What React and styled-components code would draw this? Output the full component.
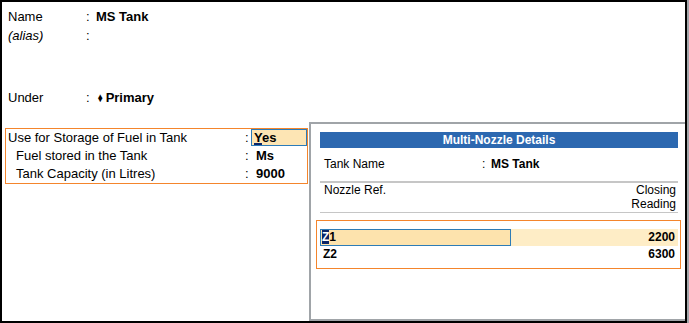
import React from 'react';
import styled, { createGlobalStyle } from 'styled-components';

const GlobalStyle = createGlobalStyle`
  html, body {
    margin: 0;
    padding: 0;
    background: #fff;
  }
  body {
    font-family: "Liberation Sans", Arial, sans-serif;
    color: #000;
  }
`;

const Screen = styled.div`
  width: 689px;
  height: 323px;
  display: flex;
  background: #a3a6aa;
`;

const Window = styled.div`
  position: relative;
  box-sizing: border-box;
  width: 687px;
  height: 323px;
  border: 2px solid #000;
  background: #fff;
  padding: 5px 0 0 3px;
  font-size: 13px;
`;

const MasterFields = styled.div`
  padding-left: 3px;
`;

const Field = styled.div`
  display: grid;
  grid-template-columns: 78px 10px auto;
  height: 19px;
  line-height: 19px;
  margin-top: ${(p) => p.$gap || 0}px;
`;

const Label = styled.span`
  font-style: ${(p) => (p.$italic ? 'italic' : 'normal')};
`;

const Value = styled.span`
  font-weight: bold;
`;

const Diamond = styled.span`
  display: inline-block;
  font-size: 13px;
  transform: scaleX(0.75);
  margin: 0 2px 0 1px;
`;

const FuelGroup = styled.div`
  box-sizing: border-box;
  width: 303px;
  margin-top: 21px;
  border: 1px solid #f4852c;
`;

const GroupRow = styled.div`
  display: grid;
  grid-template-columns: 239px 6px 1fr;
  height: 18px;
  line-height: 18px;
`;

const GroupLabel = styled.span`
  padding-left: ${(p) => (p.$indent ? 10 : 2)}px;
  white-space: nowrap;
`;

const GroupValue = styled.span`
  box-sizing: border-box;
  height: 17px;
  line-height: 16px;
  font-weight: bold;
  padding-left: ${(p) => (p.$active ? 2 : 4)}px;
  border: 1px solid ${(p) => (p.$active ? '#2b7bb9' : 'transparent')};
  background: ${(p) => (p.$active ? '#fde5b4' : 'transparent')};
`;

const Hotkey = styled.span`
  text-decoration: underline;
  text-decoration-thickness: 2px;
  text-underline-offset: 1px;
  text-decoration-color: #0b2567;
`;

const Popup = styled.div`
  position: absolute;
  left: 307px;
  top: 120px;
  right: 0;
  bottom: 0;
  box-sizing: border-box;
  border: 2px solid #a0a4a8;
  border-right: none;
  background: #fff;
  padding: 8px 7px 0 9px;
  font-size: 12px;
`;

const Title = styled.div`
  height: 16px;
  line-height: 16px;
  background: #2c68b0;
  color: #fff;
  font-weight: bold;
  text-align: center;
`;

const TankRow = styled.div`
  display: grid;
  grid-template-columns: 158px 9px 1fr;
  margin-top: 6px;
  height: 20px;
  line-height: 20px;
  padding-left: 4px;
`;

const Divider = styled.div`
  height: ${(p) => p.$size}px;
  background: #c6c6c6;
  margin-top: ${(p) => p.$gap}px;
`;

const ColumnHeads = styled.div`
  display: flex;
  justify-content: space-between;
  line-height: 14px;
  padding: 0 2px 0 4px;
`;

const RightHead = styled.div`
  text-align: right;
`;

const NozzleList = styled.div`
  margin: 7px -3px 0 -4px;
  border: 1px solid #f4852c;
  padding: 8px 2px 5px 3px;
`;

const NozzleRow = styled.div`
  display: flex;
  justify-content: space-between;
  height: 17px;
  line-height: 17px;
  font-weight: bold;
  background: ${(p) => (p.$active ? '#feedc6' : 'transparent')};
`;

const NozzleRef = styled.span`
  box-sizing: border-box;
  width: 191px;
  height: 17px;
  line-height: 15px;
  padding-left: ${(p) => (p.$active ? 1 : 2)}px;
  border: 1px solid ${(p) => (p.$active ? '#2d7cb6' : 'transparent')};
  background: ${(p) => (p.$active ? '#fde3ad' : 'transparent')};
`;

const Cursor = styled.span`
  background: #0b2567;
  color: #fff;
`;

const Reading = styled.span`
  padding-right: 3px;
`;

const nozzles = [
  { ref: 'Z1', reading: '2200' },
  { ref: 'Z2', reading: '6300' },
];

export default function App() {
  return (
    <>
      <GlobalStyle />
      <Screen>
        <Window>
          <MasterFields>
            <Field>
              <Label>Name</Label>
              <span>:</span>
              <Value>MS Tank</Value>
            </Field>
            <Field>
              <Label $italic>(alias)</Label>
              <span>:</span>
              <span />
            </Field>
            <Field $gap={43}>
              <Label>Under</Label>
              <span>:</span>
              <Value>
                <Diamond>♦</Diamond>Primary
              </Value>
            </Field>
          </MasterFields>

          <FuelGroup>
            <GroupRow>
              <GroupLabel>Use for Storage of Fuel in Tank</GroupLabel>
              <span>:</span>
              <GroupValue $active>
                <Hotkey>Y</Hotkey>es
              </GroupValue>
            </GroupRow>
            <GroupRow>
              <GroupLabel $indent>Fuel stored in the Tank</GroupLabel>
              <span>:</span>
              <GroupValue>Ms</GroupValue>
            </GroupRow>
            <GroupRow>
              <GroupLabel $indent>Tank Capacity (in Litres)</GroupLabel>
              <span>:</span>
              <GroupValue>9000</GroupValue>
            </GroupRow>
          </FuelGroup>

          <Popup>
            <Title>Multi-Nozzle Details</Title>
            <TankRow>
              <span>Tank Name</span>
              <span>:</span>
              <Value>MS Tank</Value>
            </TankRow>
            <Divider $size={2} $gap={7} />
            <ColumnHeads>
              <div>Nozzle Ref.</div>
              <RightHead>
                Closing
                <br />
                Reading
              </RightHead>
            </ColumnHeads>
            <Divider $size={1} $gap={1} />
            <NozzleList>
              {nozzles.map((n, i) => (
                <NozzleRow key={n.ref} $active={i === 0}>
                  <NozzleRef $active={i === 0}>
                    {i === 0 ? (
                      <>
                        <Cursor>{n.ref[0]}</Cursor>
                        {n.ref.slice(1)}
                      </>
                    ) : (
                      n.ref
                    )}
                  </NozzleRef>
                  <Reading>{n.reading}</Reading>
                </NozzleRow>
              ))}
            </NozzleList>
          </Popup>
        </Window>
      </Screen>
    </>
  );
}
